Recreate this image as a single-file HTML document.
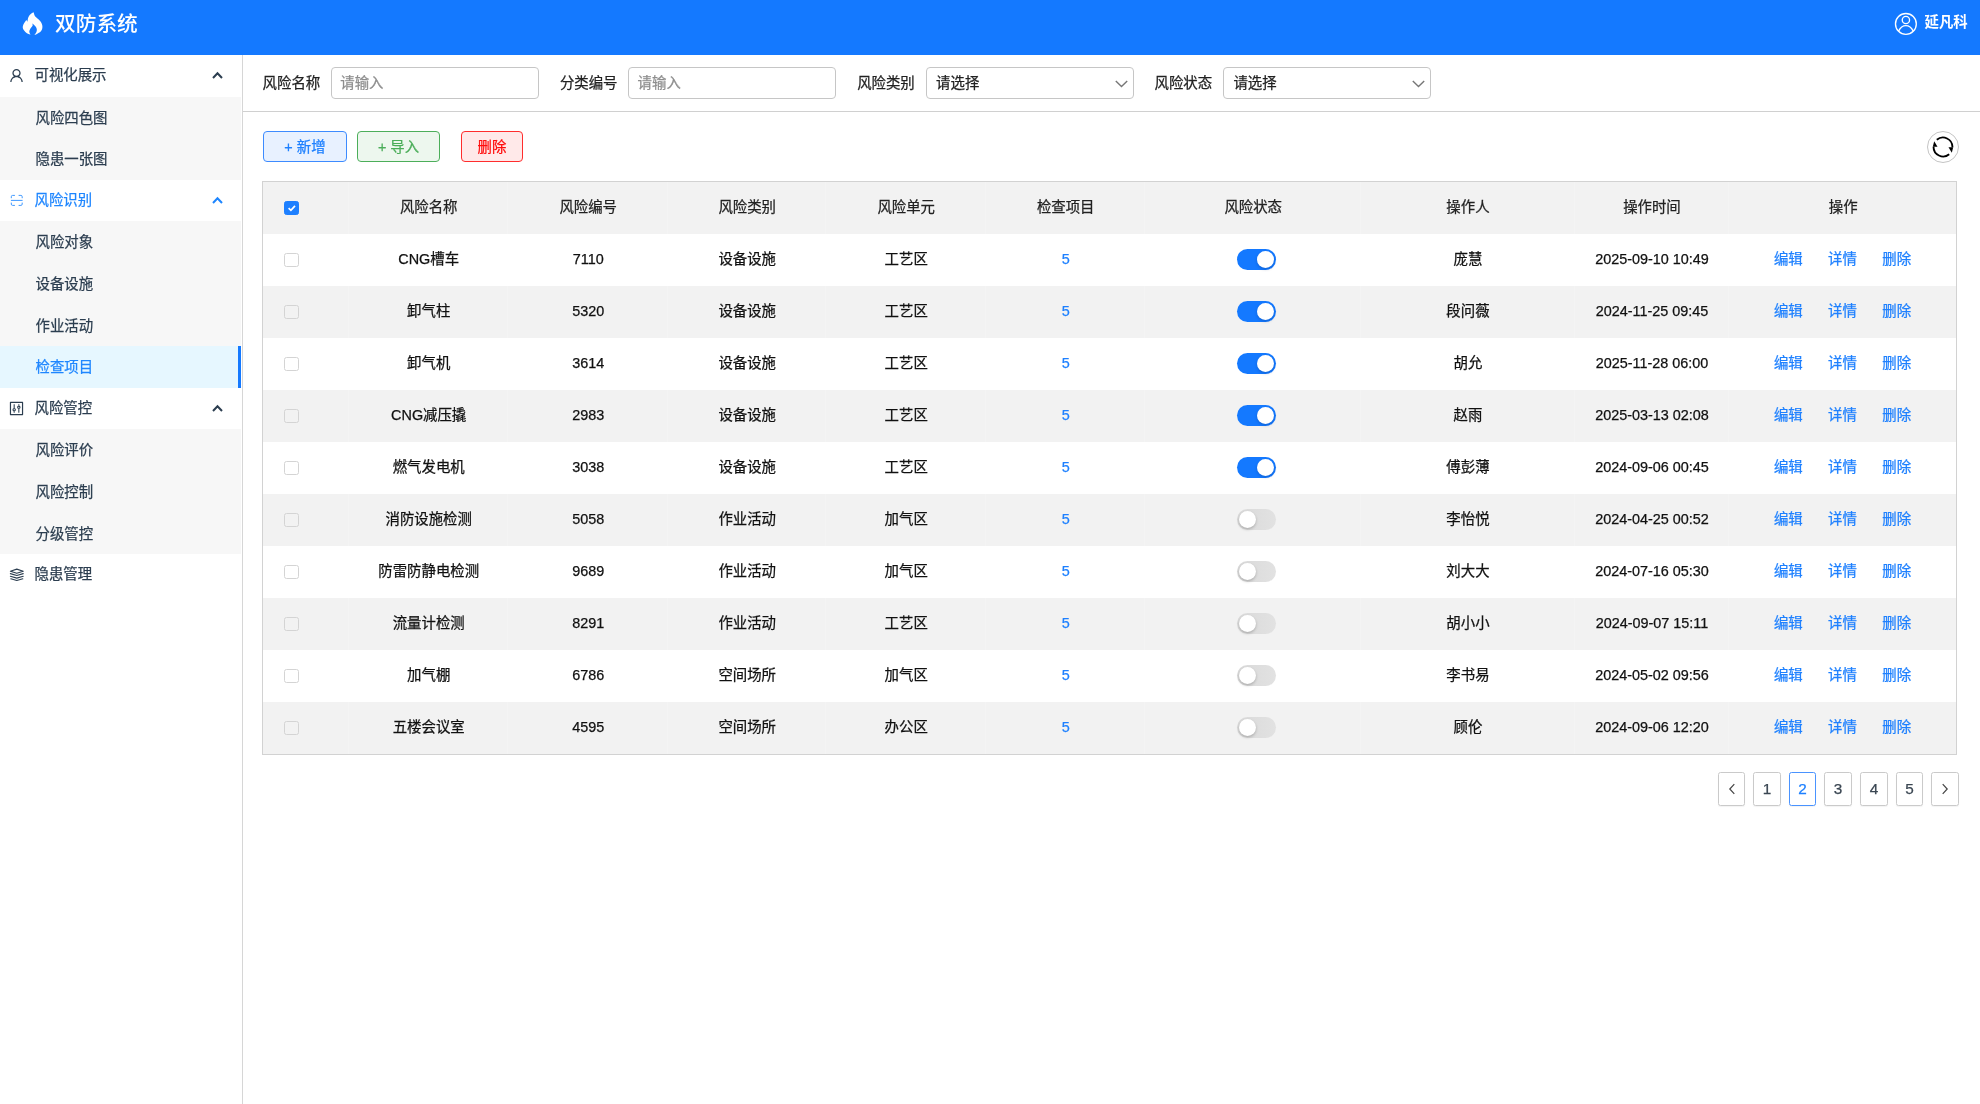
<!DOCTYPE html>
<html lang="zh-CN">
<head>
<meta charset="utf-8">
<title>双防系统</title>
<style>
*{box-sizing:border-box;margin:0;padding:0}
html,body{width:1980px;height:1104px;overflow:hidden;background:#fff}
body{position:relative;font-family:"Liberation Sans","Noto Sans CJK SC",sans-serif;font-size:14.4px;color:#1a1a1a;-webkit-text-stroke:0.25px currentColor}
#app{position:absolute;left:0;top:0;width:1980px;height:1104px;will-change:transform}
a{text-decoration:none;color:inherit}
.hdr{position:absolute;left:0;top:0;width:1980px;height:55px;background:#1479ff;color:#fff}
.hdr .logo{position:absolute;left:18px;top:8px;width:30px;height:32px}
.hdr .title{position:absolute;left:55px;top:0;height:47px;line-height:47px;font-size:20.7px;font-weight:500;letter-spacing:0;-webkit-text-stroke:0}
.hdr .ava{position:absolute;left:1893.5px;top:11.5px;width:23.8px;height:23.8px}
.hdr .uname{position:absolute;left:1924.5px;top:0;height:44px;line-height:44px;font-size:14.4px;font-weight:700;-webkit-text-stroke:0}
.side{position:absolute;left:0;top:55px;width:243px;height:1049px;border-right:1px solid #d6d6d6;background:#fff}
.side .it{position:absolute;left:0;width:241.4px;height:41.6px;line-height:41.6px;color:#2c3e50;white-space:nowrap}
.side .it.sub{background:#f7f7f7;padding-left:35.5px;padding-top:1px}
.side .it.grp{padding-left:34.5px;background:#fff}
.side .it.act{background:#e6f7ff;color:#1e86ff}
.side .it.act:after{content:"";position:absolute;right:0;top:0;bottom:0;width:3px;background:#1479ff}
.side .it.blue{color:#1e86ff}
.side .ico{position:absolute;left:8.2px;top:12.3px;width:17px;height:17px}
.side .chev{position:absolute;left:211px;top:14px;width:13px;height:12px}
.main-line{position:absolute;left:243px;top:111px;width:1737px;height:1px;background:#d0d0d0}
.flt label{position:absolute;top:67.5px;height:31px;line-height:31px;color:#222;white-space:nowrap}
.flt .inp{position:absolute;top:67px;width:208px;height:32px;border:1px solid #c6c6c6;border-radius:4px;line-height:30px;padding-left:8.3px;color:#8e8e8e;background:#fff;white-space:nowrap}
.flt .inp.sel{color:#222;padding-left:9.5px}
.flt .inp svg{position:absolute;right:5px;top:11.8px;width:13px;height:8px}
.btn{position:absolute;top:131px;height:31px;line-height:31.4px;border:1px solid;border-radius:4px;text-align:center;white-space:nowrap}
.btn.b1{left:263.2px;width:83.5px;color:#1e80ff;border-color:#3d8bff;background:#e8f1ff}
.btn.b2{left:357px;width:83px;color:#4cae5a;border-color:#4cae5a;background:#edf7ee}
.btn.b3{left:460.8px;width:62.2px;color:#ff0d0d;border-color:#ff2d2d;background:#ffe9e9}
.rfr{position:absolute;left:1926.7px;top:130.9px;width:32.2px;height:32.2px;border:1px solid #c4c4c4;border-radius:50%;background:#fff}
.rfr svg{position:absolute;left:3.1px;top:3.1px;width:24px;height:24px}
.tbl{position:absolute;left:262px;top:181px;width:1695px;height:574px;border:1px solid #d2d2d2;background:#fff}
.tbl .tr{position:absolute;left:0;width:1693px;height:52px;background:#fff}
.tbl .tr.th,.tbl .tr.odd{background:#f2f2f2}
.tbl .td{position:absolute;top:0;height:52px;line-height:50px;text-align:center;white-space:nowrap;color:#111;border-right:1px solid rgba(255,255,255,.2);padding-left:1.4px}
.tbl .td:last-child{border-right:0}
.tbl .th .td{color:#222}
.tbl .td.lk{color:#1e80ff}
.tbl .td.ops{padding-left:0}
.tbl .td.ops a{color:#1e80ff;display:inline-block;width:28.8px;margin:0 12.7px}
.cb{position:absolute;left:21.2px;top:18.6px;width:14.6px;height:14.6px;border:1px solid #d4d4d4;border-radius:2.5px;background:transparent}
.cb.on{background:#1e80ff;border-color:#1e80ff}
.cb.on svg{position:absolute;left:-0.7px;top:-0.7px}
.sw{position:absolute;left:92.3px;top:15.2px;width:38.8px;height:21px;border-radius:11px;background:linear-gradient(90deg,#d9d9d9,#e2e2e2)}
.sw i{position:absolute;left:2.2px;top:2px;width:17px;height:17px;border-radius:50%;background:#fff;box-shadow:0 1.5px 3px rgba(0,0,0,.22)}
.sw.on{background:#1479ff}
.sw.on i{left:19.7px;box-shadow:0 1.5px 3px rgba(0,35,90,.25)}
.pg{position:absolute;top:772px;width:28px;height:34px;line-height:32px;border:1px solid #cacaca;border-radius:2.5px;text-align:center;font-size:15.3px;color:#3a4652;background:#fff;box-shadow:0 1px 1px rgba(0,0,0,.05)}
.pg.cur{border-color:#4a93ff;color:#1e80ff}
.pg svg{position:absolute;left:8.5px;top:9.6px;width:9px;height:12px}
</style>
</head>
<body>
<div id="app">
<div class="hdr">
<svg class="logo" viewBox="0 0 1035 1104"><path fill="#fff" d="M540 150C543 161 549 191 558 215C567 239 578 272 595 295C612 318 638 330 660 350C682 370 708 389 730 412C752 435 778 463 795 490C812 517 824 548 832 575C840 602 842 624 842 650C842 676 839 705 830 730C821 755 808 779 790 800C772 821 745 841 720 858C695 875 666 891 640 902C614 913 578 921 565 925C572 918 593 896 605 880C617 864 628 850 635 830C642 810 650 784 650 760C650 736 642 708 632 685C622 662 605 641 590 622C575 603 556 589 540 572C524 555 502 530 495 522C497 531 504 558 505 575C506 592 507 608 498 625C489 642 466 658 450 680C434 702 415 733 405 755C395 777 390 791 390 810C390 829 398 852 405 870C412 888 426 912 430 920C415 914 369 901 340 885C311 869 280 847 255 825C230 803 207 776 192 752C177 728 168 704 165 680C162 656 165 634 172 610C179 586 192 560 205 535C218 510 235 482 250 462C265 442 288 423 295 415C300 426 318 468 322 478C324 467 331 431 335 410C339 389 337 374 345 350C353 326 369 292 385 268C401 244 423 222 442 205C461 188 484 174 500 165C516 156 533 152 540 150Z"/></svg>
<div class="title">双防系统</div>
<svg class="ava" viewBox="0 0 24 24" fill="none" stroke="#fff" stroke-width="1.35"><circle cx="12" cy="12" r="10.500"/><circle cx="12" cy="8.100" r="3.700"/><path d="M4.600 19.400 C6.500 15.400 9 13.800 12 13.800 C15 13.800 17.500 15.400 19.400 19.400"/></svg>
<div class="uname">延凡科</div>
</div>
<div class="side">
<div class="it grp" style="top:0.0px"><svg class="ico" viewBox="0 0 1024 1024"><path fill="currentColor" d="M858.5 763.6a374 374 0 00-80.6-119.5 375.63 375.63 0 00-119.5-80.6c-.4-.2-.8-.3-1.2-.5C719.500 518 760 444.700 760 362c0-137-111-248-248-248S264 225 264 362c0 82.700 40.500 156 102.800 201.100-.4.2-.8.3-1.2.5-44.800 18.900-85 46-119.500 80.600a375.630 375.630 0 00-80.600 119.500A371.700 371.700 0 00136 901.800a8 8 0 008 8.200h60c4.400 0 7.900-3.500 8-7.800 2-77.200 33-149.500 87.800-204.300 56.700-56.700 132-87.900 212.200-87.900s155.500 31.200 212.200 87.900C779 752.700 810 825 812 902.200c.1 4.400 3.600 7.800 8 7.800h60a8 8 0 008-8.200c-1-47.800-10.900-94.300-29.500-138.200zM512 534c-45.900 0-89.100-17.900-121.600-50.400S340 407.900 340 362c0-45.900 17.900-89.100 50.400-121.600S466.100 190 512 190s89.100 17.900 121.600 50.400S684 316.100 684 362c0 45.900-17.900 89.100-50.400 121.600S557.900 534 512 534z"/></svg>可视化展示<svg class="chev" viewBox="0 0 13 12"><path d="M2 9 L6.500 4.300 L11 9" fill="none" stroke="currentColor" stroke-width="2"/></svg></div>
<div class="it sub" style="top:41.6px">风险四色图</div>
<div class="it sub" style="top:83.2px">隐患一张图</div>
<div class="it grp blue" style="top:124.8px"><svg class="ico" viewBox="0 0 17 17" fill="none" stroke="currentColor" stroke-width="1" stroke-linecap="round" opacity=".85"><path d="M3.300 5.800V4.700a1.300 1.300 0 0 1 1.300-1.300H6.500"/><path d="M11 3.400h1.900a1.300 1.300 0 0 1 1.300 1.300v1.100"/><path d="M14.200 11v1.100a1.300 1.300 0 0 1-1.300 1.300H11"/><path d="M6.500 13.400H4.600a1.300 1.300 0 0 1-1.300-1.300V11"/><path d="M3.300 8.400h10.900"/></svg>风险识别<svg class="chev" viewBox="0 0 13 12"><path d="M2 9 L6.500 4.300 L11 9" fill="none" stroke="currentColor" stroke-width="2"/></svg></div>
<div class="it sub" style="top:166.4px">风险对象</div>
<div class="it sub" style="top:208.0px">设备设施</div>
<div class="it sub" style="top:249.6px">作业活动</div>
<div class="it sub act" style="top:291.2px">检查项目</div>
<div class="it grp" style="top:332.8px"><svg class="ico" viewBox="0 0 1024 1024"><path fill="currentColor" d="M880 112H144c-17.700 0-32 14.300-32 32v736c0 17.700 14.300 32 32 32h736c17.700 0 32-14.300 32-32V144c0-17.700-14.300-32-32-32zm-40 728H184V184h656v656z"/><path fill="currentColor" d="M340 683v77c0 4.400 3.600 8 8 8h48c4.400 0 8-3.600 8-8v-77c-10.100 3.300-20.800 5-32 5s-21.900-1.800-32-5zm64-198V264c0-4.400-3.600-8-8-8h-48c-4.400 0-8 3.600-8 8v221c10.100-3.300 20.800-5 32-5s21.900 1.800 32 5z"/><path fill="currentColor" fill-rule="evenodd" d="M372 480a104 104 0 100 208 104 104 0 000-208zm0 68a36 36 0 110 72 36 36 0 010-72z"/><path fill="currentColor" d="M620 539v221c0 4.400 3.600 8 8 8h48c4.400 0 8-3.600 8-8V539c-10.100 3.300-20.800 5-32 5s-21.900-1.800-32-5zm64-198v-77c0-4.400-3.600-8-8-8h-48c-4.400 0-8 3.600-8 8v77c10.100-3.300 20.800-5 32-5s21.900 1.800 32 5z"/><path fill="currentColor" fill-rule="evenodd" d="M652 336a104 104 0 100 208 104 104 0 000-208zm0 68a36 36 0 110 72 36 36 0 010-72z"/></svg>风险管控<svg class="chev" viewBox="0 0 13 12"><path d="M2 9 L6.500 4.300 L11 9" fill="none" stroke="currentColor" stroke-width="2"/></svg></div>
<div class="it sub" style="top:374.4px">风险评价</div>
<div class="it sub" style="top:416.0px">风险控制</div>
<div class="it sub" style="top:457.6px">分级管控</div>
<div class="it grp" style="top:499.2px"><svg class="ico" viewBox="0 0 17 17" fill="none" stroke="currentColor" stroke-width="1.15" stroke-linejoin="round" stroke-linecap="round"><path d="M8.800 3.100 L15.200 5.200 L8.800 7.300 L2.400 5.200 Z"/><path d="M2.400 7.600 L8.800 9.500 L15.200 7.600"/><path d="M2.400 10.300 L8.800 12.100 L15.200 10.300"/><path d="M2.800 12.800 L8.800 14.500 L14.800 12.800"/></svg>隐患管理</div>
</div>
<div class="main-line"></div>
<div class="flt">
<label style="left:262.6px">风险名称</label><div class="inp" style="left:331px">请输入</div>
<label style="left:559.9px">分类编号</label><div class="inp" style="left:628.3px">请输入</div>
<label style="left:857.2px">风险类别</label><div class="inp sel" style="left:925.6px">请选择<svg viewBox="0 0 13 8"><path d="M0.800 0.900 L6.500 6.600 L12.200 0.900" fill="none" stroke="#777" stroke-width="1.4"/></svg></div>
<label style="left:1154.5px">风险状态</label><div class="inp sel" style="left:1222.9px">请选择<svg viewBox="0 0 13 8"><path d="M0.800 0.900 L6.500 6.600 L12.200 0.900" fill="none" stroke="#777" stroke-width="1.4"/></svg></div>
</div>
<div class="btn b1">+ 新增</div>
<div class="btn b2">+ 导入</div>
<div class="btn b3">删除</div>
<div class="rfr"><svg viewBox="-12 -12 24 24"><g fill="none" stroke="#000" stroke-width="1.85"><path d="M-6.200 -7.200 A9.500 9.500 0 0 1 9.450 0.300"/><path d="M6.200 7.200 A9.500 9.500 0 0 1 -9.450 -0.300"/></g><path d="M5.500 0.200 L10.200 0.200 L8.800 5.700 Z" fill="#000"/><path d="M-5.500 -0.200 L-10.200 -0.200 L-8.800 -5.700 Z" fill="#000"/></svg></div>
<div class="tbl">
<div class="tr th" style="top:0"><div class="td c0" style="left:0px;width:86px"><span class="cb on"><svg viewBox="0 0 14 14" width="14" height="14"><path d="M3.600 7.200 L5.900 9.300 L10 4.900" fill="none" stroke="#fff" stroke-width="1.700"/></svg></span></div><div class="td" style="left:86px;width:159px">风险名称</div><div class="td" style="left:245px;width:160px">风险编号</div><div class="td" style="left:405px;width:158px">风险类别</div><div class="td" style="left:563px;width:160px">风险单元</div><div class="td" style="left:723px;width:159px">检查项目</div><div class="td" style="left:882px;width:216px">风险状态</div><div class="td" style="left:1098px;width:213.5px">操作人</div><div class="td" style="left:1311.5px;width:154.5px">操作时间</div><div class="td" style="left:1466px;width:227px">操作</div></div>
<div class="tr" style="top:52px"><div class="td c0" style="left:0px;width:86px"><span class="cb"></span></div><div class="td" style="left:86px;width:159px">CNG槽车</div><div class="td" style="left:245px;width:160px">7110</div><div class="td" style="left:405px;width:158px">设备设施</div><div class="td" style="left:563px;width:160px">工艺区</div><div class="td lk" style="left:723px;width:159px">5</div><div class="td" style="left:882px;width:216px"><span class="sw on"><i></i></span></div><div class="td" style="left:1098px;width:213.5px">庞慧</div><div class="td" style="left:1311.5px;width:154.5px">2025-09-10 10:49</div><div class="td ops" style="left:1466px;width:227px"><a>编辑</a><a>详情</a><a>删除</a></div></div>
<div class="tr odd" style="top:104px"><div class="td c0" style="left:0px;width:86px"><span class="cb"></span></div><div class="td" style="left:86px;width:159px">卸气柱</div><div class="td" style="left:245px;width:160px">5320</div><div class="td" style="left:405px;width:158px">设备设施</div><div class="td" style="left:563px;width:160px">工艺区</div><div class="td lk" style="left:723px;width:159px">5</div><div class="td" style="left:882px;width:216px"><span class="sw on"><i></i></span></div><div class="td" style="left:1098px;width:213.5px">段问薇</div><div class="td" style="left:1311.5px;width:154.5px">2024-11-25 09:45</div><div class="td ops" style="left:1466px;width:227px"><a>编辑</a><a>详情</a><a>删除</a></div></div>
<div class="tr" style="top:156px"><div class="td c0" style="left:0px;width:86px"><span class="cb"></span></div><div class="td" style="left:86px;width:159px">卸气机</div><div class="td" style="left:245px;width:160px">3614</div><div class="td" style="left:405px;width:158px">设备设施</div><div class="td" style="left:563px;width:160px">工艺区</div><div class="td lk" style="left:723px;width:159px">5</div><div class="td" style="left:882px;width:216px"><span class="sw on"><i></i></span></div><div class="td" style="left:1098px;width:213.5px">胡允</div><div class="td" style="left:1311.5px;width:154.5px">2025-11-28 06:00</div><div class="td ops" style="left:1466px;width:227px"><a>编辑</a><a>详情</a><a>删除</a></div></div>
<div class="tr odd" style="top:208px"><div class="td c0" style="left:0px;width:86px"><span class="cb"></span></div><div class="td" style="left:86px;width:159px">CNG减压撬</div><div class="td" style="left:245px;width:160px">2983</div><div class="td" style="left:405px;width:158px">设备设施</div><div class="td" style="left:563px;width:160px">工艺区</div><div class="td lk" style="left:723px;width:159px">5</div><div class="td" style="left:882px;width:216px"><span class="sw on"><i></i></span></div><div class="td" style="left:1098px;width:213.5px">赵雨</div><div class="td" style="left:1311.5px;width:154.5px">2025-03-13 02:08</div><div class="td ops" style="left:1466px;width:227px"><a>编辑</a><a>详情</a><a>删除</a></div></div>
<div class="tr" style="top:260px"><div class="td c0" style="left:0px;width:86px"><span class="cb"></span></div><div class="td" style="left:86px;width:159px">燃气发电机</div><div class="td" style="left:245px;width:160px">3038</div><div class="td" style="left:405px;width:158px">设备设施</div><div class="td" style="left:563px;width:160px">工艺区</div><div class="td lk" style="left:723px;width:159px">5</div><div class="td" style="left:882px;width:216px"><span class="sw on"><i></i></span></div><div class="td" style="left:1098px;width:213.5px">傅彭薄</div><div class="td" style="left:1311.5px;width:154.5px">2024-09-06 00:45</div><div class="td ops" style="left:1466px;width:227px"><a>编辑</a><a>详情</a><a>删除</a></div></div>
<div class="tr odd" style="top:312px"><div class="td c0" style="left:0px;width:86px"><span class="cb"></span></div><div class="td" style="left:86px;width:159px">消防设施检测</div><div class="td" style="left:245px;width:160px">5058</div><div class="td" style="left:405px;width:158px">作业活动</div><div class="td" style="left:563px;width:160px">加气区</div><div class="td lk" style="left:723px;width:159px">5</div><div class="td" style="left:882px;width:216px"><span class="sw"><i></i></span></div><div class="td" style="left:1098px;width:213.5px">李怡悦</div><div class="td" style="left:1311.5px;width:154.5px">2024-04-25 00:52</div><div class="td ops" style="left:1466px;width:227px"><a>编辑</a><a>详情</a><a>删除</a></div></div>
<div class="tr" style="top:364px"><div class="td c0" style="left:0px;width:86px"><span class="cb"></span></div><div class="td" style="left:86px;width:159px">防雷防静电检测</div><div class="td" style="left:245px;width:160px">9689</div><div class="td" style="left:405px;width:158px">作业活动</div><div class="td" style="left:563px;width:160px">加气区</div><div class="td lk" style="left:723px;width:159px">5</div><div class="td" style="left:882px;width:216px"><span class="sw"><i></i></span></div><div class="td" style="left:1098px;width:213.5px">刘大大</div><div class="td" style="left:1311.5px;width:154.5px">2024-07-16 05:30</div><div class="td ops" style="left:1466px;width:227px"><a>编辑</a><a>详情</a><a>删除</a></div></div>
<div class="tr odd" style="top:416px"><div class="td c0" style="left:0px;width:86px"><span class="cb"></span></div><div class="td" style="left:86px;width:159px">流量计检测</div><div class="td" style="left:245px;width:160px">8291</div><div class="td" style="left:405px;width:158px">作业活动</div><div class="td" style="left:563px;width:160px">工艺区</div><div class="td lk" style="left:723px;width:159px">5</div><div class="td" style="left:882px;width:216px"><span class="sw"><i></i></span></div><div class="td" style="left:1098px;width:213.5px">胡小小</div><div class="td" style="left:1311.5px;width:154.5px">2024-09-07 15:11</div><div class="td ops" style="left:1466px;width:227px"><a>编辑</a><a>详情</a><a>删除</a></div></div>
<div class="tr" style="top:468px"><div class="td c0" style="left:0px;width:86px"><span class="cb"></span></div><div class="td" style="left:86px;width:159px">加气棚</div><div class="td" style="left:245px;width:160px">6786</div><div class="td" style="left:405px;width:158px">空间场所</div><div class="td" style="left:563px;width:160px">加气区</div><div class="td lk" style="left:723px;width:159px">5</div><div class="td" style="left:882px;width:216px"><span class="sw"><i></i></span></div><div class="td" style="left:1098px;width:213.5px">李书易</div><div class="td" style="left:1311.5px;width:154.5px">2024-05-02 09:56</div><div class="td ops" style="left:1466px;width:227px"><a>编辑</a><a>详情</a><a>删除</a></div></div>
<div class="tr odd" style="top:520px"><div class="td c0" style="left:0px;width:86px"><span class="cb"></span></div><div class="td" style="left:86px;width:159px">五楼会议室</div><div class="td" style="left:245px;width:160px">4595</div><div class="td" style="left:405px;width:158px">空间场所</div><div class="td" style="left:563px;width:160px">办公区</div><div class="td lk" style="left:723px;width:159px">5</div><div class="td" style="left:882px;width:216px"><span class="sw"><i></i></span></div><div class="td" style="left:1098px;width:213.5px">顾伦</div><div class="td" style="left:1311.5px;width:154.5px">2024-09-06 12:20</div><div class="td ops" style="left:1466px;width:227px"><a>编辑</a><a>详情</a><a>删除</a></div></div>
</div>
<div class="pg" style="left:1718px;width:27px"><svg viewBox="0 0 9 12" style="left:9px"><path d="M6.300 1.200 L1.800 6 L6.300 10.800" fill="none" stroke="#444" stroke-width="1.200"/></svg></div>
<div class="pg" style="left:1753px">1</div>
<div class="pg cur" style="left:1789px;width:27px">2</div>
<div class="pg" style="left:1824px">3</div>
<div class="pg" style="left:1860px">4</div>
<div class="pg" style="left:1896px;width:27px">5</div>
<div class="pg" style="left:1931px"><svg viewBox="0 0 9 12" style="left:7.800px"><path d="M2.700 1.200 L7.200 6 L2.700 10.800" fill="none" stroke="#444" stroke-width="1.200"/></svg></div>
</div>
</body>
</html>
